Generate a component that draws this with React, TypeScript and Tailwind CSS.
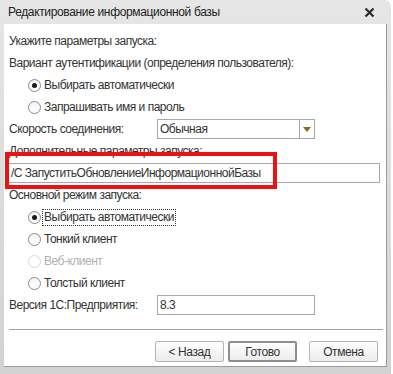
import React from "react";

function Radio({label, checked, disabled, focused}: { label: string; checked?: boolean; disabled?: boolean; focused?: boolean }) {
    return (
        <div className="flex h-[22px] items-center pl-[24px]">
            <span
                className={`flex h-[13px] w-[13px] items-center justify-center rounded-full border ${
                    disabled ? "border-[#d6d6d6] bg-white" : "border-[#8a8a8a] bg-gradient-to-b from-[#f4f4f4] to-white"
                }`}>
                {checked && <span className="h-[5px] w-[5px] rounded-full bg-[#1a1a1a]"/>}
            </span>
            <span
                className={`ml-[2px] px-[1px] leading-[15px] ${disabled ? "text-[#b0b0b0]" : "text-[#333]"} ${
                    focused ? "outline outline-1 outline-dotted outline-[#333]" : ""
                }`}>
                {label}
            </span>
        </div>
    );
}

function Button({label, primary}: { label: string; primary?: boolean }) {
    return (
        <button
            className={`h-[21px] w-[69px] rounded-[2px] bg-gradient-to-b from-white to-[#ececec] text-[12px] tracking-[-0.4px] text-[#333] ${
                primary ? "border-2 border-[#8e8e8e]" : "border border-[#b4b4b4]"
            }`}>
            {label}
        </button>
    );
}

export default function App() {
    return (
        <div className="h-[374px] w-[393px] bg-white font-['Liberation_Sans',Arial,sans-serif] text-[12px] tracking-[-0.5px] text-[#333]">
            <div className="flex h-full w-[391px] flex-col rounded-tr-[7px] bg-gradient-to-b from-[#e6e6e6] to-[#d2d2d2] pb-[7px] pl-[4px] pr-[4px]">
                <div className="flex h-[24px] items-center justify-between pl-[4px] pr-[12px]">
                    <span className="text-[12px] tracking-[-0.35px] text-[#222]">Редактирование информационной базы</span>
                    <svg width="11" height="11" viewBox="0 0 11 11">
                        <path d="M1.5 1.5 L9.5 9.5 M9.5 1.5 L1.5 9.5" stroke="#2a2a2a" strokeWidth="2.2"/>
                    </svg>
                </div>
                <div className="flex flex-1 flex-col border-r border-b border-[#9a9a9a] bg-white pt-[6px]">
                    <div className="flex h-[22px] items-center pl-[5px]">Укажите параметры запуска:</div>
                    <div className="flex h-[22px] items-center pl-[5px]">Вариант аутентификации (определения пользователя):</div>
                    <Radio label="Выбирать автоматически" checked/>
                    <Radio label="Запрашивать имя и пароль"/>
                    <div className="flex h-[22px] items-center pl-[5px]">
                        <span className="w-[148px]">Скорость соединения:</span>
                        <div className="flex h-[20px] w-[158px] items-stretch border border-[#a8a8a8]">
                            <span className="flex flex-1 items-center pl-[2px]">Обычная</span>
                            <span className="flex w-[15px] items-center justify-center border-l border-[#a8a8a8]">
                                <svg width="8" height="5" viewBox="0 0 8 5">
                                    <path d="M0 0 H8 L4 5 Z" fill="#8b6a1e"/>
                                </svg>
                            </span>
                        </div>
                    </div>
                    <div className="flex h-[22px] items-center pl-[5px]">Дополнительные параметры запуска:</div>
                    <div className="relative flex h-[22px] items-center pl-[1px]">
                        <div className="flex h-[20px] w-[375px] items-center border border-[#a8a8a8] pl-[5px]">
                            /С ЗапуститьОбновлениеИнформационнойБазы
                        </div>
                        <div className="absolute left-[1px] top-[-10px] h-[37px] w-[272px] border-[4px] border-[#ee1111]"/>
                    </div>
                    <div className="flex h-[22px] items-center pl-[5px]">Основной режим запуска:</div>
                    <Radio label="Выбирать автоматически" checked focused/>
                    <Radio label="Тонкий клиент"/>
                    <Radio label="Веб-клиент" disabled/>
                    <Radio label="Толстый клиент"/>
                    <div className="flex h-[22px] items-center pl-[5px]">
                        <span className="w-[148px]">Версия 1С:Предприятия:</span>
                        <div className="flex h-[20px] w-[158px] items-center border border-[#a8a8a8] pl-[2px]">8.3</div>
                    </div>
                    <div className="mt-[13px] ml-[5px] mr-[3px] border-t border-[#a0a0a0]"/>
                    <div className="mt-[11px] flex justify-end gap-[4px] pr-[8px]">
                        <Button label="< Назад"/>
                        <Button label="Готово" primary/>
                        <div className="w-[4px]"/>
                        <Button label="Отмена"/>
                    </div>
                </div>
            </div>
        </div>
    );
}
